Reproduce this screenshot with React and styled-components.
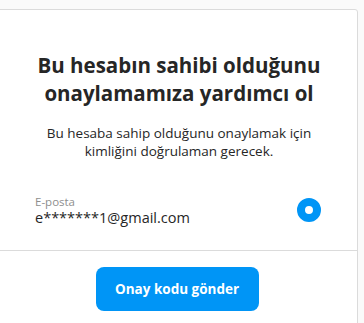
import React from 'react'
import styled, { createGlobalStyle } from 'styled-components'

const Global = createGlobalStyle`
    html, body {
        margin: 0;
        padding: 0;
        background: #fafafa;
    }
    body {
        font-family: "Open Sans", "Noto Sans", Arial, sans-serif;
        color: #262626;
    }
`

export default function App() {
    return (
        <>
            <Global />
            <Page>
                <Card>
                    <Body>
                        <Title>Bu hesabın sahibi olduğunu onaylamamıza yardımcı ol</Title>
                        <Text>Bu hesaba sahip olduğunu onaylamak için kimliğini doğrulaman gerecek.</Text>
                        <Option>
                            <Info>
                                <Label>E-posta</Label>
                                <Value>e*******1@gmail.com</Value>
                            </Info>
                            <Radio />
                        </Option>
                    </Body>
                    <Footer>
                        <Button>Onay kodu gönder</Button>
                    </Footer>
                </Card>
            </Page>
        </>
    )
}

const Page = styled.div`
    padding: 9px 6px 0 0;
    height: 323px;
    box-sizing: border-box;
    overflow: hidden;
`

const Card = styled.div`
    margin-left: -4px;
    background: #fff;
    border: 1px solid #dbdbdb;
    border-radius: 3px;
`

const Body = styled.div`
    padding: 41px 34px 24px 38px;
    display: flex;
    flex-direction: column;
    align-items: center;
    text-align: center;
`

const Title = styled.h2`
    margin: 0;
    font-size: 20.5px;
    line-height: 28px;
    font-weight: 700;
`

const Text = styled.p`
    margin: 17px 0 0;
    font-size: 13.5px;
    line-height: 18px;
`

const Option = styled.div`
    align-self: stretch;
    display: flex;
    align-items: center;
    justify-content: space-between;
    margin-top: 34px;
    text-align: left;
`

const Info = styled.div`
    display: flex;
    flex-direction: column;
`

const Label = styled.span`
    font-size: 11.5px;
    line-height: 15px;
    color: #8e8e8e;
`

const Value = styled.span`
    font-size: 14.5px;
    line-height: 17px;
`

const Radio = styled.span`
    width: 24px;
    height: 24px;
    border-radius: 50%;
    box-sizing: border-box;
    border: 8px solid #0095f6;
    background: #fff;
    margin-right: 2px;
`

const Footer = styled.div`
    border-top: 1px solid #dbdbdb;
    padding: 16px 0 20px;
    display: flex;
    justify-content: center;
`

const Button = styled.button`
    width: 163px;
    height: 44px;
    border: 0;
    border-radius: 8px;
    background: #0095f6;
    color: #fff;
    font-family: inherit;
    font-size: 13.5px;
    font-weight: 700;
    cursor: pointer;
`
